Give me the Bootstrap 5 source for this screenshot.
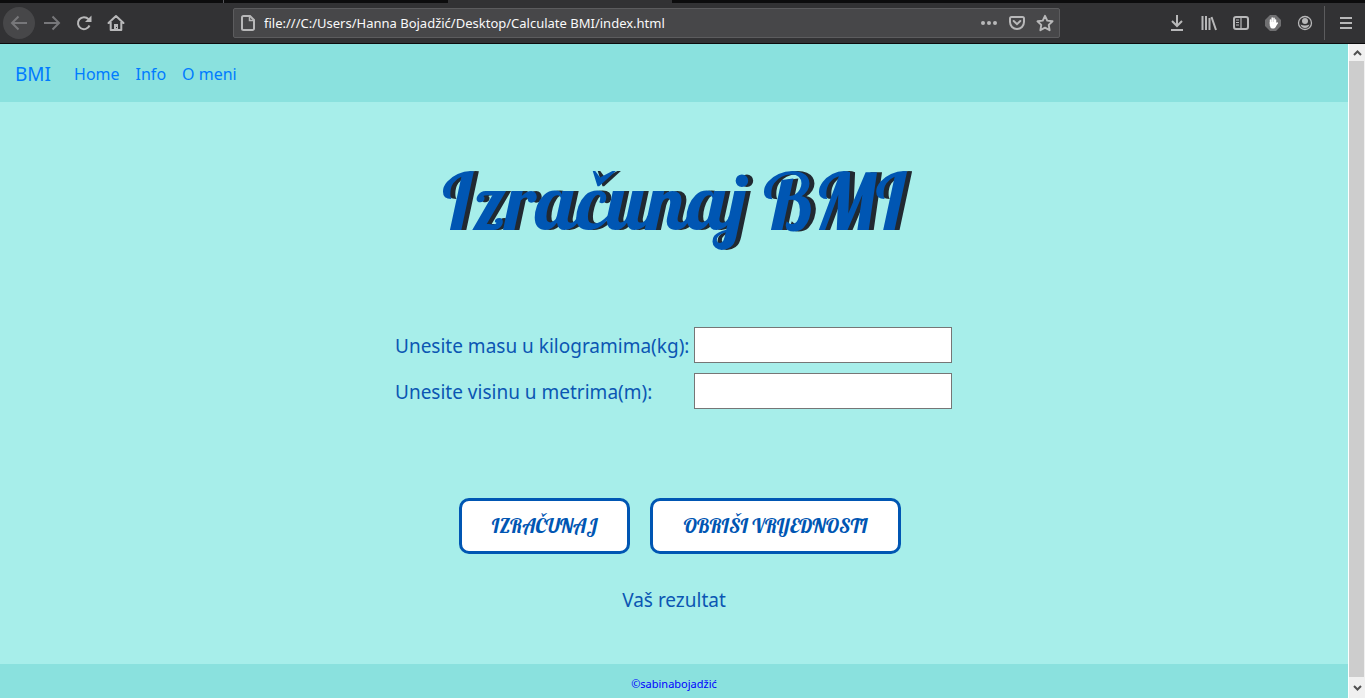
<!DOCTYPE html>
<html lang="bs">
<head>
<meta charset="utf-8">
<meta name="viewport" content="width=device-width, initial-scale=1">
<title>Calculate BMI</title>
<link href="https://cdn.jsdelivr.net/npm/bootstrap@5.3.0/dist/css/bootstrap.min.css" rel="stylesheet">
<style>
  body { font-family: "Segoe UI", "Noto Sans", sans-serif; background: #a7eeea; }
  svg { display: block; fill: none; stroke: #b8b8b9; stroke-width: 2; }

  .tab-strip { height: 3px; background: #0c0c0d; }
  .tab-idle { width: 224px; }
  .tab-idle:first-child { border-right: 1px solid #55555a; }
  .tab-open { width: 224px; background: #323234; }
  .toolbar { height: 41px; padding: 0 3px; background: #323234; border-bottom: 1px solid #0c0c0d; }
  .tool { width: 32px; height: 32px; padding: 0; border: 0; background: none; display: flex; align-items: center; justify-content: center; }
  .tool-round { border-radius: 50%; background: #474749; margin-right: 1px; }
  .tool-dim svg { stroke: #77777a; }
  .address { width: 827px; height: 30px; margin-left: 101px; padding: 0 0 0 6px; background: #474749; border: 1px solid #5c5c5e; border-radius: 2px; }
  .address input { min-width: 0; border: 0; padding: 2px 8px 0; outline: 0; background: none; color: #f9f9fa; font-family: "Segoe UI", "Noto Sans", sans-serif; font-size: 13px; }
  .address .tool { width: 28px; }
  .tool-split { width: 1px; height: 34px; margin: 0 5px 0 3px; background: #5c5c5e; }

  .site-bar { padding: 9px 15px 7px; background: #8ae1de; }
  .site-bar .navbar-brand { font-size: 19px; line-height: 30px; color: #007bff; padding: 6px 0; margin-right: 15px; }
  .site-bar .nav-link { font-size: 16px; line-height: 26px; color: #007bff; padding: 8px; }

  .calc { color: #0b56b3; font-size: 19px; line-height: 30px; }
  .calc-title { margin: 44px 0 72px; font-family: Lobster, "Liberation Serif", serif; font-weight: 500; font-size: 79px; line-height: 109px; color: #0056b3; text-shadow: 5px 0 0 #212931; }
  .calc-fields { display: grid; grid-template-columns: 289px 258px; gap: 10px; align-items: center; padding-right: 1px; }
  .calc-fields label { padding-top: 2px; white-space: nowrap; }
  .calc-fields .form-control { height: 36px; border: 1px solid #767676; border-radius: 0; }
  .calc-actions { gap: 20px; margin: 89px 0 31px; padding-left: 12px; }
  .calc-actions .btn { height: 56px; padding: 0 10px; border: 3px solid #0056b3; border-radius: 10px; background: #fff; color: #0056b3; font-family: Lobster, "Liberation Serif", serif; font-weight: 400; font-size: 20px; }
  .btn-calc { width: 171px; }
  .btn-clear { width: 251px; }

  .site-foot { background: #8ae1de; padding: 11px 0 5px; font-size: 11px; line-height: 18px; color: #0000ff; }

  .scroll-rail { width: 17px; background: #f0f0f0; border-left: 1px solid #fff; }
  .scroll-rail .scroll-step { height: 17px; padding: 0; border: 0; background: none; display: flex; align-items: center; justify-content: center; }
  .scroll-rail svg { stroke: #505050; }
  .scroll-thumb { background: #cdcdcd; margin-right: 1px; }
  .scroll-rail .scroll-step:last-child { height: 21px; }
</style>
</head>
<body>
<div class="d-flex flex-column min-vh-100">
  <div class="tab-strip d-flex"><div class="tab-idle"></div><div class="tab-idle"></div><div class="tab-open"></div></div>

  <div class="toolbar d-flex align-items-center">
    <button class="tool tool-round tool-dim" type="button" aria-label="Back"><svg width="18" height="16" viewBox="0 0 18 16"><path d="M17 8H2M8.500 1.500 2 8l6.500 6.500"/></svg></button>
    <button class="tool tool-dim" type="button" aria-label="Forward"><svg width="18" height="16" viewBox="0 0 18 16"><path d="M1 8h15M9.500 1.500 16 8l-6.500 6.500"/></svg></button>
    <button class="tool" type="button" aria-label="Reload"><svg width="16" height="16" viewBox="0 0 16 16"><path d="M13.500 10.500A6 6 0 1 1 12.500 4.200"/><path d="M15.500 .5v6.500H9z" fill="#b8b8b9" stroke="none"/></svg></button>
    <button class="tool" type="button" aria-label="Home page"><svg width="18" height="18" viewBox="0 0 18 18"><path d="M1.500 9 9 2l7.500 7M3.700 8v8h10.600V8" stroke-linejoin="round" stroke-linecap="round"/><path d="M7 16v-6h4v6z" fill="#b8b8b9" stroke="none"/><path d="M9.500 13v1" stroke="#323234" stroke-width="1"/></svg></button>
    <div class="address d-flex align-items-center">
      <svg width="16" height="16" viewBox="0 0 16 16"><path d="M3.500 1H10l4 4v8.500a1.500 1.500 0 0 1-1.500 1.500h-9A1.500 1.500 0 0 1 2 13.500v-11A1.500 1.500 0 0 1 3.500 1z"/><path d="M9.500 1v4.500H14" stroke-width="1.500"/></svg>
      <input class="flex-grow-1" type="text" aria-label="Address" value="file:///C:/Users/Hanna Bojadžić/Desktop/Calculate BMI/index.html">
      <button class="tool" type="button" aria-label="Page actions"><svg width="16" height="16" viewBox="0 0 16 16"><g fill="#b8b8b9" stroke="none"><circle cx="2" cy="8" r="2"/><circle cx="8" cy="8" r="2"/><circle cx="14" cy="8" r="2"/></g></svg></button>
      <button class="tool" type="button" aria-label="Save"><svg width="16" height="16" viewBox="0 0 16 16"><path d="M2.500 2h11A1.500 1.500 0 0 1 15 3.500V7A7 7 0 0 1 1 7V3.500A1.500 1.500 0 0 1 2.500 2z"/><path d="m4.700 6 3.300 3.200L11.300 6" stroke-linecap="round"/></svg></button>
      <button class="tool" type="button" aria-label="Bookmark"><svg width="18" height="18" viewBox="0 0 16 16"><path d="m8 1.600 2 4.300 4.700.6-3.400 3.200.8 4.700L8 12.100l-4.100 2.300.8-4.700L1.300 6.500 6 5.900z" stroke-linejoin="round" stroke-width="1.700"/></svg></button>
    </div>
    <button class="tool ms-auto" type="button" aria-label="Downloads"><svg width="14" height="16" viewBox="0 0 14 16"><path d="M7 0v11M2 6l5 5 5-5M1 15h12"/></svg></button>
    <button class="tool" type="button" aria-label="Library"><svg width="16" height="16" viewBox="0 0 16 16"><path d="M1.500 1v14M5 1v14M8.500 3v12M10.500 2 15 15"/></svg></button>
    <button class="tool" type="button" aria-label="Sidebar"><svg width="16" height="14" viewBox="0 0 16 14"><rect x="1" y="1" width="14" height="12" rx="2"/><path d="M8 1v12M3 4h3M3 6.500h3M3 9h3" stroke-width="1.200"/></svg></button>
    <button class="tool" type="button" aria-label="Ad blocker"><svg width="16" height="16" viewBox="0 0 16 16"><path d="M5 0h6l5 5v6l-5 5H5l-5-5V5z" fill="#707072" stroke="none"/><path d="M5.500 5v4M7.200 3v6M9 3.200V9M10.500 5v5M12.300 8 10 11" stroke="#fff" stroke-linecap="round" stroke-width="1.500"/><path d="M4.800 7h6.200l.6 2.500q-1 4-3 4H7q-1.600 0-2.200-3z" fill="#fff" stroke="none"/></svg></button>
    <button class="tool" type="button" aria-label="Account"><svg width="16" height="16" viewBox="0 0 16 16"><circle cx="8" cy="8" r="6.500" stroke-width="1.300"/><circle cx="8" cy="6" r="3" fill="#b8b8b9" stroke="none"/><path d="M3.500 9.500q2 1 4.500 1t4.500-1q-1.200 3.500-4.500 3.500T3.500 9.500z" fill="#b8b8b9" stroke="none"/></svg></button>
    <span class="tool-split"></span>
    <button class="tool" type="button" aria-label="Menu"><svg width="12" height="12" viewBox="0 0 12 12"><path d="M0 1h12M0 6h12M0 11h12"/></svg></button>
  </div>

  <div class="d-flex flex-grow-1">
    <div class="d-flex flex-column flex-grow-1">
      <nav class="site-bar navbar navbar-expand justify-content-start">
        <a class="navbar-brand" href="#">BMI</a>
        <ul class="navbar-nav">
          <li class="nav-item"><a class="nav-link" href="#">Home</a></li>
          <li class="nav-item"><a class="nav-link" href="#">Info</a></li>
          <li class="nav-item"><a class="nav-link" href="#">O meni</a></li>
        </ul>
      </nav>
      <main class="calc d-flex flex-column align-items-center flex-grow-1">
        <h1 class="calc-title">Izračunaj BMI</h1>
        <form class="d-flex flex-column align-items-center">
          <div class="calc-fields">
            <label for="mass">Unesite masu u kilogramima(kg):</label>
            <input class="form-control" id="mass" type="text">
            <label for="height">Unesite visinu u metrima(m):</label>
            <input class="form-control" id="height" type="text">
          </div>
          <div class="calc-actions d-flex">
            <button class="btn btn-calc" type="button">IZRAČUNAJ</button>
            <button class="btn btn-clear" type="reset">OBRIŠI VRIJEDNOSTI</button>
          </div>
        </form>
        <p class="mb-0">Vaš rezultat</p>
      </main>
      <footer class="site-foot text-center">©sabinabojadžić</footer>
    </div>
    <div class="scroll-rail d-flex flex-column">
      <button class="scroll-step" type="button" aria-label="Scroll up"><svg width="9" height="6" viewBox="0 0 9 6"><path d="m1 5 3.500-3.500L8 5"/></svg></button>
      <div class="scroll-thumb flex-grow-1"></div>
      <button class="scroll-step" type="button" aria-label="Scroll down"><svg width="9" height="6" viewBox="0 0 9 6"><path d="m1 1 3.500 3.500L8 1"/></svg></button>
    </div>
  </div>
</div>
<script src="https://cdn.jsdelivr.net/npm/bootstrap@5.3.0/dist/js/bootstrap.bundle.min.js"></script>
</body>
</html>
